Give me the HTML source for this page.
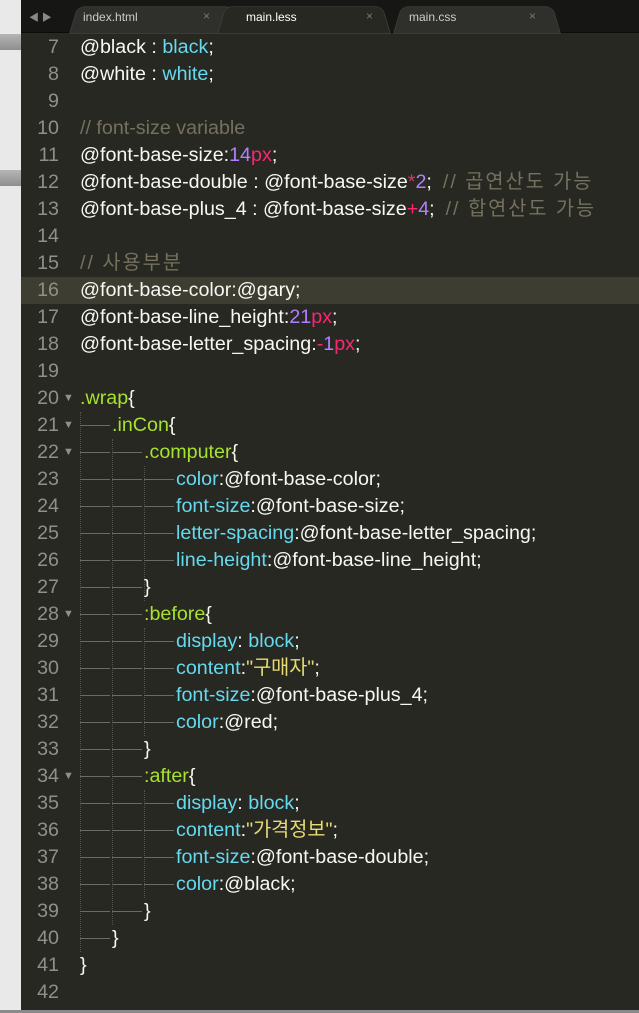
<!DOCTYPE html>
<html><head><meta charset="utf-8"><style>
body{margin:0;width:639px;height:1013px;overflow:hidden;background:#e9e9e9;position:relative;font-family:"Liberation Sans","Noto Sans CJK KR",sans-serif}
.ed{position:absolute;left:21px;top:0;width:618px;height:1010px;background:#272822}
.bottom{position:absolute;left:0;top:1010px;width:639px;height:3px;background:#8a8a8a}
.tabbar{position:absolute;left:21px;top:0;width:618px;height:32px;background:#161614;border-bottom:1px solid #0c0c0b}
.tab{position:absolute;top:3px;height:29px;background:#2f302c;border-radius:8px 8px 0 0;transform:perspective(40px) rotateX(8deg);transform-origin:bottom;border:1px solid #3a3a36}
.tab.a{background:#272822}
.tl{position:absolute;top:10px;font-size:12px;color:#ccc}
.tx{position:absolute;top:9px;font-size:12px;color:#777}
.ln{position:absolute;left:21px;width:618px;height:27px;font-size:19.7px;line-height:27px;white-space:pre;color:#f8f8f2}
.n{position:absolute;left:0;width:38px;text-align:right;color:#8f908a}
.c{position:absolute;left:59px}
.f{position:absolute;left:42px;color:#8f908a;font-size:11px}
.hl{background:#3e3d32}
.k{color:#66d9ef}.g{color:#a6e22e}.p{color:#ae81ff}.r{color:#f92672}.cm{color:#75715e}.y{color:#e6db74}
.arr{display:inline-block;border-top:1px solid #6a6a66;width:30px;vertical-align:middle;margin-right:2px}
.vg{position:absolute;border-left:1px dotted #55554f;width:0}
.cs{letter-spacing:2px}
</style></head><body>
<div style="position:absolute;left:0;top:34px;width:21px;height:16px;background:linear-gradient(#b5b5b5,#8e8e8e)"></div>
<div style="position:absolute;left:0;top:170px;width:21px;height:16px;background:linear-gradient(#b5b5b5,#8e8e8e)"></div>
<div class="ed"></div>
<div class="tabbar">
<div style="position:absolute;left:8px;top:9px;color:#888;font-size:10px">◀ ▶</div>
<div class="tab" style="left:48px;width:170px"></div>
<div class="tab" style="left:372px;width:166px"></div>
<div class="tab a" style="left:196px;width:172px"></div>
<span class="tl" style="left:62px">index.html</span><span class="tx" style="left:182px">×</span>
<span class="tl" style="left:225px;color:#fff">main.less</span><span class="tx" style="left:345px">×</span>
<span class="tl" style="left:388px">main.css</span><span class="tx" style="left:508px">×</span>
</div>
<div class="vg" style="left:80px;top:412px;height:540px"></div>
<div class="vg" style="left:112px;top:439px;height:486px"></div>
<div class="vg" style="left:144px;top:466px;height:135px"></div>
<div class="vg" style="left:144px;top:628px;height:108px"></div>
<div class="vg" style="left:144px;top:790px;height:108px"></div>

<div class="ln" style="top:34px"><span class="n">7</span><span class="c">@black : <span class="k">black</span>;</span></div>
<div class="ln" style="top:61px"><span class="n">8</span><span class="c">@white : <span class="k">white</span>;</span></div>
<div class="ln" style="top:88px"><span class="n">9</span></div>
<div class="ln" style="top:115px"><span class="n">10</span><span class="c cm">// font-size variable</span></div>
<div class="ln" style="top:142px"><span class="n">11</span><span class="c">@font-base-size:<span class="p">14</span><span class="r">px</span>;</span></div>
<div class="ln" style="top:169px"><span class="n">12</span><span class="c">@font-base-double : @font-base-size<span class="r">*</span><span class="p">2</span>;  <span class="cm cs">// 곱연산도 가능</span></span></div>
<div class="ln" style="top:196px"><span class="n">13</span><span class="c">@font-base-plus_4 : @font-base-size<span class="r">+</span><span class="p">4</span>;  <span class="cm cs">// 합연산도 가능</span></span></div>
<div class="ln" style="top:223px"><span class="n">14</span></div>
<div class="ln" style="top:250px"><span class="n">15</span><span class="c cm cs">// 사용부분</span></div>
<div class="ln hl" style="top:277px"><span class="n">16</span><span class="c">@font-base-color:@gary;</span></div>
<div class="ln" style="top:304px"><span class="n">17</span><span class="c">@font-base-line_height:<span class="p">21</span><span class="r">px</span>;</span></div>
<div class="ln" style="top:331px"><span class="n">18</span><span class="c">@font-base-letter_spacing:<span class="r">-</span><span class="p">1</span><span class="r">px</span>;</span></div>
<div class="ln" style="top:358px"><span class="n">19</span></div>
<div class="ln" style="top:385px"><span class="n">20</span><span class="f">▼</span><span class="c"><span class="g">.wrap</span>{</span></div>
<div class="ln" style="top:412px"><span class="n">21</span><span class="f">▼</span><span class="c"><i class="arr"></i><span class="g">.inCon</span>{</span></div>
<div class="ln" style="top:439px"><span class="n">22</span><span class="f">▼</span><span class="c"><i class="arr"></i><i class="arr"></i><span class="g">.computer</span>{</span></div>
<div class="ln" style="top:466px"><span class="n">23</span><span class="c"><i class="arr"></i><i class="arr"></i><i class="arr"></i><span class="k">color</span>:@font-base-color;</span></div>
<div class="ln" style="top:493px"><span class="n">24</span><span class="c"><i class="arr"></i><i class="arr"></i><i class="arr"></i><span class="k">font-size</span>:@font-base-size;</span></div>
<div class="ln" style="top:520px"><span class="n">25</span><span class="c"><i class="arr"></i><i class="arr"></i><i class="arr"></i><span class="k">letter-spacing</span>:@font-base-letter_spacing;</span></div>
<div class="ln" style="top:547px"><span class="n">26</span><span class="c"><i class="arr"></i><i class="arr"></i><i class="arr"></i><span class="k">line-height</span>:@font-base-line_height;</span></div>
<div class="ln" style="top:574px"><span class="n">27</span><span class="c"><i class="arr"></i><i class="arr"></i>}</span></div>
<div class="ln" style="top:601px"><span class="n">28</span><span class="f">▼</span><span class="c"><i class="arr"></i><i class="arr"></i><span class="g">:before</span>{</span></div>
<div class="ln" style="top:628px"><span class="n">29</span><span class="c"><i class="arr"></i><i class="arr"></i><i class="arr"></i><span class="k">display</span>: <span class="k">block</span>;</span></div>
<div class="ln" style="top:655px"><span class="n">30</span><span class="c"><i class="arr"></i><i class="arr"></i><i class="arr"></i><span class="k">content</span>:<span class="y">"구매자"</span>;</span></div>
<div class="ln" style="top:682px"><span class="n">31</span><span class="c"><i class="arr"></i><i class="arr"></i><i class="arr"></i><span class="k">font-size</span>:@font-base-plus_4;</span></div>
<div class="ln" style="top:709px"><span class="n">32</span><span class="c"><i class="arr"></i><i class="arr"></i><i class="arr"></i><span class="k">color</span>:@red;</span></div>
<div class="ln" style="top:736px"><span class="n">33</span><span class="c"><i class="arr"></i><i class="arr"></i>}</span></div>
<div class="ln" style="top:763px"><span class="n">34</span><span class="f">▼</span><span class="c"><i class="arr"></i><i class="arr"></i><span class="g">:after</span>{</span></div>
<div class="ln" style="top:790px"><span class="n">35</span><span class="c"><i class="arr"></i><i class="arr"></i><i class="arr"></i><span class="k">display</span>: <span class="k">block</span>;</span></div>
<div class="ln" style="top:817px"><span class="n">36</span><span class="c"><i class="arr"></i><i class="arr"></i><i class="arr"></i><span class="k">content</span>:<span class="y">"가격정보"</span>;</span></div>
<div class="ln" style="top:844px"><span class="n">37</span><span class="c"><i class="arr"></i><i class="arr"></i><i class="arr"></i><span class="k">font-size</span>:@font-base-double;</span></div>
<div class="ln" style="top:871px"><span class="n">38</span><span class="c"><i class="arr"></i><i class="arr"></i><i class="arr"></i><span class="k">color</span>:@black;</span></div>
<div class="ln" style="top:898px"><span class="n">39</span><span class="c"><i class="arr"></i><i class="arr"></i>}</span></div>
<div class="ln" style="top:925px"><span class="n">40</span><span class="c"><i class="arr"></i>}</span></div>
<div class="ln" style="top:952px"><span class="n">41</span><span class="c">}</span></div>
<div class="ln" style="top:979px"><span class="n">42</span></div>
<div class="bottom"></div>
</body></html>
